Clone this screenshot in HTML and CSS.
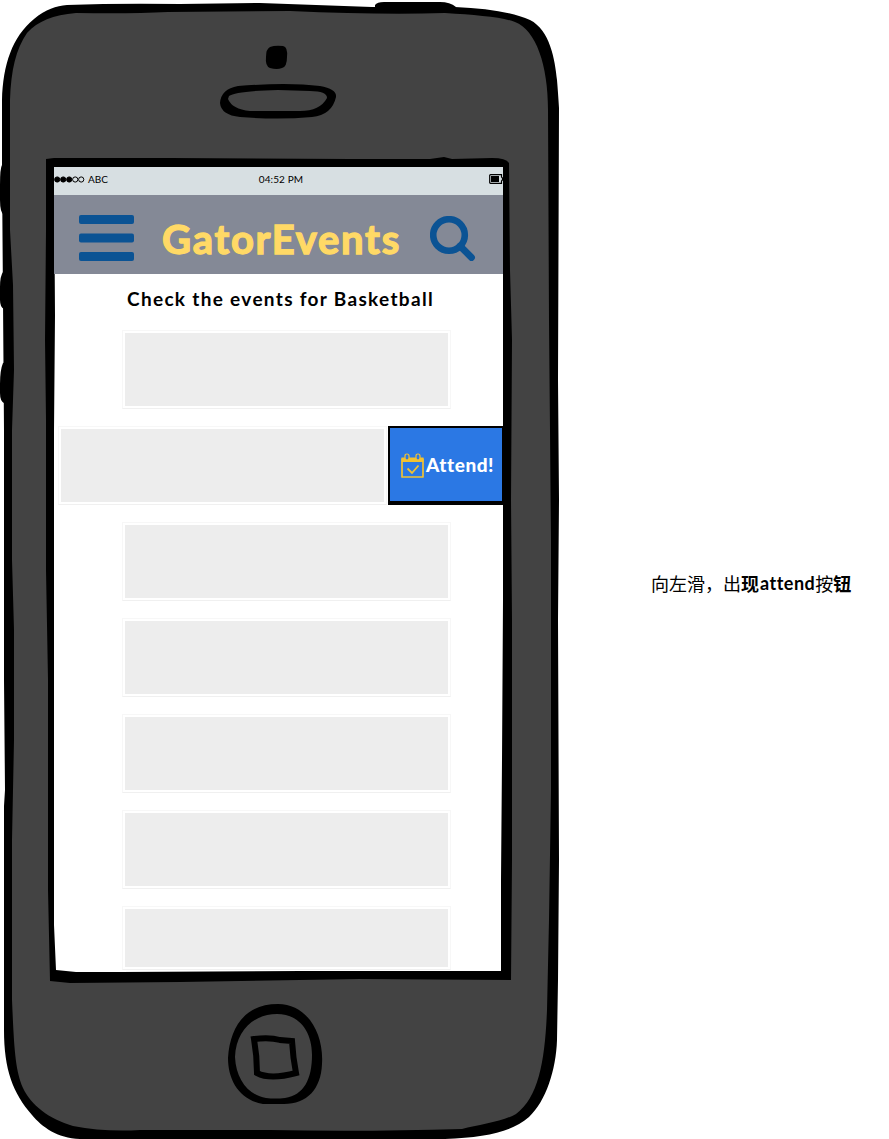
FILE: index.html
```html
<!DOCTYPE html>
<html lang="en">
<head>
<meta charset="utf-8">
<title>GatorEvents</title>
<link rel="stylesheet" href="styles.css">
</head>
<body>
<main class="board">
  <section class="phone">
    <svg class="phone-body" viewBox="0 0 562 1139" aria-hidden="true">
      <path d="M375 5Q377 2 384 2H440Q450 2 456 7L450 14H375ZM2 165Q0 168 0 185V200Q0 213 4 215L9 210V160ZM3 272Q0 276 0 287V300Q0 307 4 309L12 305V270ZM3 363Q0 370 0 384V393Q0 401 4 403L12 398V360Z"/>
      <path d="M67 5Q120 3 180 4L260 3L372 7L455 7Q505 9 530 20C550 30 555 60 557 80Q558 92 559 108L558 380L559 500L558 620L559 860L558 980L557 1040C556 1070 546 1101 529 1117C510 1133 485 1137 445 1139H80C57 1138 42 1127 32 1115C13 1093 4 1070 4 1030V806L5 790L4 680V430L2 170V100C3 65 12 37 34 19C46 9 56 6 67 5Z"/>
      <path fill="#434343" d="M76 13Q130 14 168 12L290 11Q380 15 445 13C476 15 502 17 515 22C536 30 548 65 548 110L549 320L551 540V790L549 920L547 1010C545 1060 539 1097 516 1114C504 1121 479 1125 462 1129Q360 1132 270 1130L140 1130Q104 1132 73 1126C49 1119 31 1105 23 1088C15 1070 14 1046 12 1000V840L14 740V630L12 560V430L14 370L13 285L10 230V100C11 70 16 49 27 33C38 21 53 15 76 13Z"/>
      <path d="M46 159L54 158L170 158L350 159L430 159L444 157L452 159L492 158Q506 158 509 163L510 270L512 340L511 500L512 620V860L511 980L360 979L180 982L70 983L50 981L48 890V680L46 570V420L45 340L46 230Z"/>
      <path fill="#fff" d="M54 168H503V315L503 600L502 760L501 880V971H300L120 972L76 972L56 970L54 925V430L55 315Z"/>
      <path d="M270 47Q275 45 283 46Q288 47 287 57Q287 67 282 68Q277 70 270 68Q265 66 266 57Q266 49 270 47Z"/>
      <path fill-rule="evenodd" d="M220 103Q221 89 238 86Q288 82 320 86Q337 89 336 97Q332 115 312 117Q278 120 240 117Q221 115 220 103ZM228 99Q232 109 250 111H300Q320 111 327 98Q327 91 310 91L278 90Q236 91 229 96Z"/>
      <path fill-rule="evenodd" d="M228 1058C230 1026 246 1004 278 1004C307 1004 324 1033 322 1064C321 1089 307 1104 284 1104H263C240 1100 228 1081 228 1058ZM235 1057C236 1079 248 1095 266 1098Q275 1099 285 1098C304 1095 312 1079 312 1055C312 1030 298 1014 277 1014C254 1014 236 1030 235 1057Z"/>
      <path fill="none" stroke="#000" stroke-width="6" d="M254 1039Q270 1037 280 1040L292 1041Q293 1058 296 1073Q270 1080 257 1073Q257 1056 254 1039Z"/>
    </svg>
    <div class="screen">
      <div class="status">
        <span class="carrier">
          <svg width="31" height="7" viewBox="0 0 31 7" aria-hidden="true"><g stroke="#000"><circle cx="3.2" cy="3.5" r="2.6"/><circle cx="9.2" cy="3.5" r="2.6"/><circle cx="15.2" cy="3.5" r="2.6"/><circle cx="21.2" cy="3.5" r="2.6" fill="none"/><circle cx="27.2" cy="3.5" r="2.6" fill="none"/></g></svg>
          <span class="carrier-name">ABC</span>
        </span>
        <span class="time">04:52 PM</span>
        <svg class="battery" width="14" height="10" viewBox="0 0 14 10" aria-hidden="true"><path d="M1.5.7H12.5V3L13.5 4V6L12.5 7V9.3H1.5Q.7 9.3.7 8.5V1.5Q.7.7 1.5.7Z" fill="none" stroke="#000" stroke-width="1.2"/><path d="M2 2H10V8H2Z"/></svg>
      </div>
      <header class="header">
        <svg class="menu" width="55" height="46" viewBox="0 0 55 46" fill="#0b5394" aria-hidden="true"><rect width="55" height="9" rx="2"/><rect y="18.5" width="55" height="9" rx="2"/><rect y="37" width="55" height="9" rx="2"/></svg>
        <h1 class="brand">GatorEvents</h1>
        <svg class="search" width="46" height="46" viewBox="0 0 46 46" fill="none" stroke="#0b5394" aria-hidden="true"><circle cx="19" cy="19" r="15.8" stroke-width="6.6"/><path d="M30 30L41.5 41.5" stroke-width="6.8" stroke-linecap="round"/></svg>
      </header>
      <h2 class="subtitle">Check the events for Basketball</h2>
      <div class="events">
        <div class="card"></div>
        <div class="swiped">
          <div class="card"></div>
          <div class="attend">
            <svg width="25" height="26" viewBox="0 0 25 26" fill="none" stroke="#f1c232" aria-hidden="true"><path d="M2 6H23V24H2Z" stroke-width="1.7" stroke-linejoin="round"/><path d="M1.5 4.5H23.5V9H1.5Z" fill="#f1c232" stroke="none"/><path d="M5 3Q5 1 7 1Q9 1 9 3V5Q9 7 7 7Q5 7 5 5ZM16 3Q16 1 18 1Q20 1 20 3V5Q20 7 18 7Q16 7 16 5Z" fill="#2b78e4" stroke-width="1.2"/><path d="M7.5 15.5L12 20L18.5 12.5" stroke-width="1.8"/></svg>
            <span class="attend-label">Attend!</span>
          </div>
        </div>
        <div class="card"></div>
        <div class="card"></div>
        <div class="card"></div>
        <div class="card"></div>
        <div class="card card-cut"></div>
      </div>
    </div>
  </section>
  <aside class="note"><span>向左滑，出</span><b>现</b><b class="latin">attend</b><span>按</span><b>钮</b></aside>
</main>
</body>
</html>
```
FILE: styles.css
```css
* { box-sizing: border-box; }
body {
  margin: 0;
  background: #fff;
  color: #000;
  font-family: Lato, "Noto Sans CJK SC", sans-serif;
}
.board {
  display: flex;
  width: 889px;
  height: 1139px;
  overflow: hidden;
}
.phone {
  position: relative;
  width: 562px;
  height: 1139px;
  padding: 167px 59px 0 54px;
  flex: none;
}
.phone-body {
  position: absolute;
  inset: 0;
  width: 562px;
  height: 1139px;
}
.screen {
  position: relative;
  width: 449px;
  height: 804px;
  display: flex;
  flex-direction: column;
}
.status {
  height: 28px;
  flex: none;
  display: grid;
  grid-template-columns: 1fr auto 1fr;
  align-items: center;
  background: #d7dfe2;
  font-size: 10px;
  line-height: 12px;
  padding-bottom: 4px;
}
.carrier { display: flex; align-items: center; gap: 3px; }
.time { letter-spacing: 0.1px; padding-left: 5px; }
.battery { justify-self: end; }
.header {
  height: 79px;
  flex: none;
  display: flex;
  align-items: center;
  justify-content: space-between;
  padding: 8px 27px 0 25px;
  background: #848996;
}
.menu { margin: 0 0 2px; }
.brand {
  margin: 0 1px 0 0;
  color: #ffd966;
  font-size: 40px;
  line-height: 48px;
  font-weight: 700;
  letter-spacing: 1.7px;
  white-space: nowrap;
  -webkit-text-stroke: 1.3px #ffd966;
}
.subtitle {
  margin: 0;
  padding: 13px 0 0 4px;
  height: 56px;
  flex: none;
  text-align: center;
  font-size: 19px;
  line-height: 24px;
  font-weight: 700;
  letter-spacing: 1.32px;
  white-space: nowrap;
}
.events {
  display: flex;
  flex-direction: column;
  gap: 17px;
  padding-left: 68px;
}
.card {
  width: 329px;
  height: 79px;
  flex: none;
  padding: 2px;
  border: 1px solid #f7f7f7;
  border-bottom-color: #f0f0f0;
  background: #ededed content-box;
}
.card-cut { height: 64px; }
.swiped {
  display: flex;
  margin-left: -64px;
  gap: 1px;
}
.attend {
  width: 115px;
  height: 79px;
  flex: none;
  display: flex;
  align-items: center;
  padding: 3px 0 0 10px;
  background: #2b78e4;
  border: solid #000;
  border-width: 2px 1px 4px 2px;
}
.attend-label {
  margin-left: 1px;
  color: #fff;
  font-size: 19px;
  line-height: 24px;
  font-weight: 900;
  letter-spacing: 0.55px;
  padding-bottom: 3px;
}
.note {
  display: flex;
  align-items: center;
  height: 28px;
  margin: 569px 0 0 89px;
  font-family: "Noto Sans CJK SC", sans-serif;
  font-size: 18px;
  line-height: 28px;
  white-space: nowrap;
}
.note .latin {
  margin-left: 1px;
  font-family: Lato, sans-serif;
  font-size: 18px;
  letter-spacing: 0.5px;
}
```
